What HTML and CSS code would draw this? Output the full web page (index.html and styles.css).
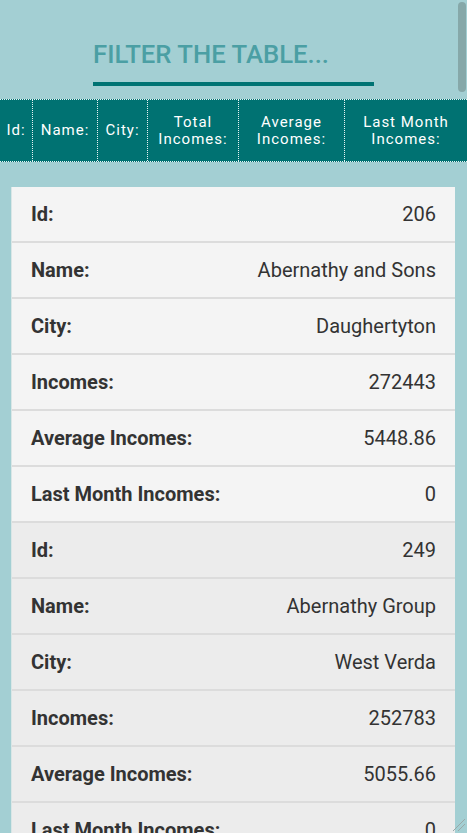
FILE: index.html
```html
<!DOCTYPE html>
<html>
<head>
<meta charset="utf-8">
<link rel="stylesheet" href="styles.css">
</head>
<body>
<div class="page">
  <div class="filter">
    <input class="filter-input" type="text" placeholder="FILTER THE TABLE...">
  </div>
  <div class="thead">
    <div class="th">Id:</div>
    <div class="th">Name:</div>
    <div class="th">City:</div>
    <div class="th">Total<br>Incomes:</div>
    <div class="th">Average<br>Incomes:</div>
    <div class="th last">Last Month<br>Incomes:</div>
  </div>
  <div class="records">
    <div class="record">
      <div class="row"><span class="label">Id:</span><span class="value">206</span></div>
      <div class="row"><span class="label">Name:</span><span class="value">Abernathy and Sons</span></div>
      <div class="row"><span class="label">City:</span><span class="value">Daughertyton</span></div>
      <div class="row"><span class="label">Incomes:</span><span class="value">272443</span></div>
      <div class="row"><span class="label">Average Incomes:</span><span class="value">5448.86</span></div>
      <div class="row"><span class="label">Last Month Incomes:</span><span class="value">0</span></div>
    </div>
    <div class="record alt">
      <div class="row"><span class="label">Id:</span><span class="value">249</span></div>
      <div class="row"><span class="label">Name:</span><span class="value">Abernathy Group</span></div>
      <div class="row"><span class="label">City:</span><span class="value">West Verda</span></div>
      <div class="row"><span class="label">Incomes:</span><span class="value">252783</span></div>
      <div class="row"><span class="label">Average Incomes:</span><span class="value">5055.66</span></div>
      <div class="row"><span class="label">Last Month Incomes:</span><span class="value">0</span></div>
    </div>
  </div>
  <div class="scroll-thumb"></div>
  <svg class="resizer" width="16" height="16" viewBox="0 0 16 16">
    <line x1="15" y1="3" x2="3" y2="15" stroke="#9aa8a8" stroke-width="1"/>
    <line x1="15" y1="8" x2="8" y2="15" stroke="#9aa8a8" stroke-width="1"/>
  </svg>
</div>
</body>
</html>
```
FILE: styles.css
```css
html, body {
  margin: 0;
  padding: 0;
  height: 100%;
  overflow: hidden;
}
body {
  background: #a3cfd3;
  font-family: Roboto, "Noto Sans", sans-serif;
}
.page {
  position: relative;
  height: 833px;
  overflow: hidden;
}
.filter {
  display: flex;
  justify-content: center;
  padding-top: 34px;
}
.filter-input {
  width: 281px;
  box-sizing: border-box;
  height: 52px;
  padding: 0 0 8px 0;
  border: none;
  border-bottom: 4px solid #007373;
  background: transparent;
  font-family: Roboto, sans-serif;
  font-weight: 500;
  font-size: 25.7px;
  color: #4b9fa4;
  outline: none;
}
.filter-input::placeholder {
  color: #4b9fa4;
  opacity: 1;
}
.thead {
  margin-top: 13px;
  display: grid;
  grid-template-columns: 33px 65px 50px 91px 106px 1fr;
  background: #007272;
  border-top: 1px dotted #e8f4f4;
  border-bottom: 1px dotted #e8f4f4;
  height: 61px;
}
.th {
  display: flex;
  align-items: center;
  justify-content: center;
  text-align: center;
  color: #ffffff;
  font-size: 15px;
  line-height: 17px;
  letter-spacing: 1px;
  border-right: 1px dotted #e8f4f4;
}
.th.last {
  border-right: none;
}
.records {
  margin: 25px 12px 0 11px;
  border-left: 1px solid #d9e6e6;
}
.record {
  background: #f4f4f4;
}
.record.alt {
  background: #ececec;
}
.row {
  display: flex;
  justify-content: space-between;
  align-items: center;
  height: 54px;
  padding: 0 19px 0 19px;
  border-bottom: 2px solid #dcdcdc;
  font-size: 20px;
  color: #333333;
}
.label {
  font-weight: 700;
}
.value {
  font-weight: 400;
}
.scroll-thumb {
  position: absolute;
  top: 2px;
  right: 1px;
  width: 8px;
  height: 90px;
  border-radius: 4px;
  background: #86a8a9;
}
.resizer {
  position: absolute;
  right: 1px;
  bottom: 1px;
}
```
